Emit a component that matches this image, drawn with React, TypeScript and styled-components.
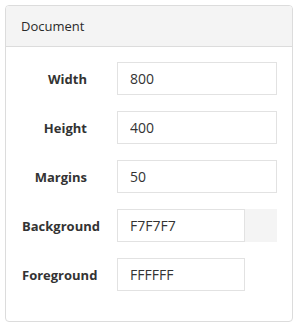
import React from "react";
import styled, { createGlobalStyle } from "styled-components";

const Global = createGlobalStyle`
  html, body { margin: 0; padding: 0; background: #fff; }
  body { padding: 5px 4px 4px 5px; font-family: "Open Sans", "Liberation Sans", sans-serif; color: #333; }
  * { box-sizing: border-box; }
`;

const Panel = styled.section`
  width: 288px;
  border: 1px solid #dcdcdc;
  border-radius: 4px;
  overflow: hidden;
`;

const Header = styled.header`
  height: 41px;
  background: #f4f4f4;
  border-bottom: 1px solid #dcdcdc;
  padding: 0 15px;
  display: flex;
  align-items: center;
  font-size: 13px;
  font-weight: 500;
  color: #2a2a2a;
`;

const Body = styled.div`
  padding: 15px 15px 30px 16px;
  display: grid;
  grid-template-columns: 65px 1fr;
  column-gap: 30px;
  row-gap: 16px;
`;

const Label = styled.label`
  font-size: 13px;
  font-weight: 700;
  display: flex;
  align-items: center;
  white-space: nowrap;
  color: #333;
  min-width: 0;
`;

const LabelText = styled.span`
  display: block;
  width: 100%;
  text-align: right;
`;

const Field = styled.div`
  display: flex;
  height: 33px;
`;

const Input = styled.input<{ $narrow?: boolean }>`
  width: ${(p) => (p.$narrow ? "128px" : "160px")};
  height: 33px;
  border: 1px solid #e2e2e2;
  border-radius: 0;
  padding: 0 12px;
  font-family: "Open Sans", "Liberation Sans", sans-serif;
  font-size: 14px;
  color: #333;
  background: #fff;
  outline: none;
`;

const Swatch = styled.div<{ $color: string }>`
  width: 32px;
  height: 33px;
  background: ${(p) => p.$color};
`;

const rows = [
  { label: "Width", value: "800" },
  { label: "Height", value: "400" },
  { label: "Margins", value: "50" },
  { label: "Background", value: "F7F7F7", color: "#F4F4F4" },
  { label: "Foreground", value: "FFFFFF", color: "#FFFFFF" },
];

export default function App() {
  return (
    <>
      <Global />
      <Panel>
        <Header>Document</Header>
        <Body>
          {rows.map((r) => (
            <React.Fragment key={r.label}>
              <Label>
                <LabelText>{r.label}</LabelText>
              </Label>
              <Field>
                <Input $narrow={!!r.color} defaultValue={r.value} />
                {r.color && <Swatch $color={r.color} />}
              </Field>
            </React.Fragment>
          ))}
        </Body>
      </Panel>
    </>
  );
}
